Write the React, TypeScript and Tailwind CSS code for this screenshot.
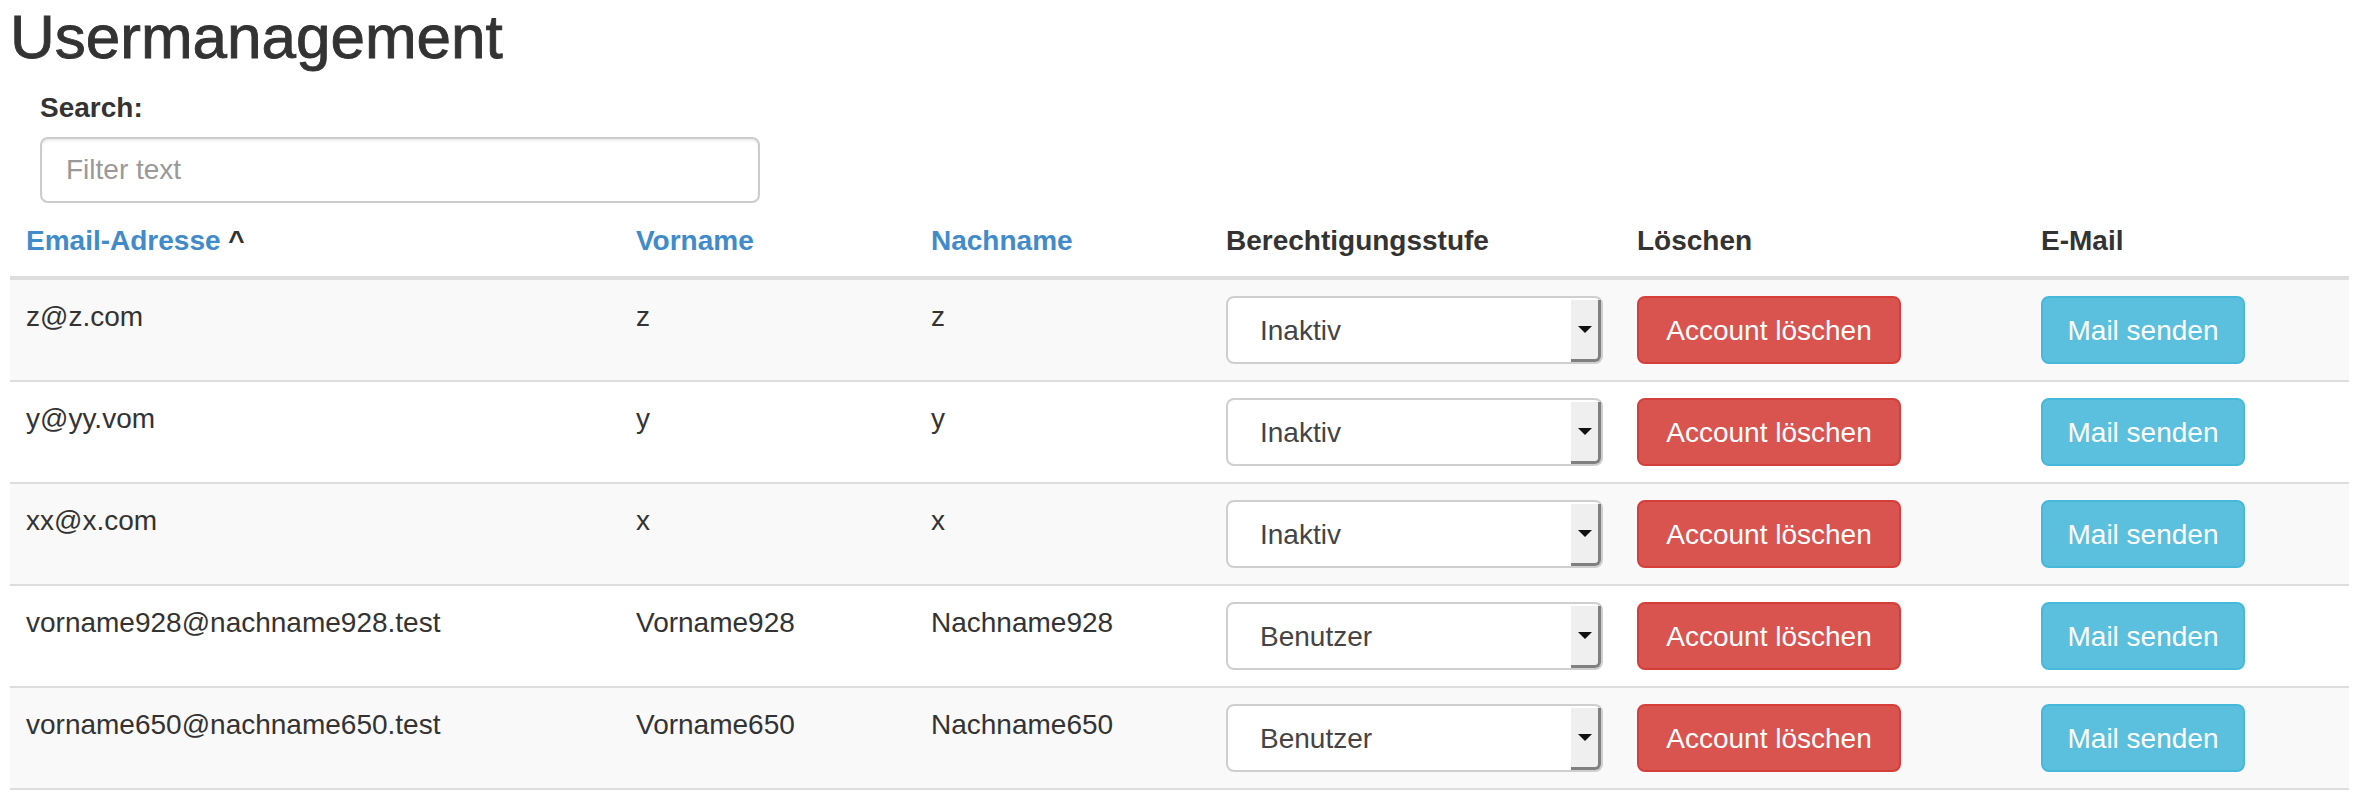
const users = [
  { email: "z@z.com", first: "z", last: "z", role: "Inaktiv" },
  { email: "y@yy.vom", first: "y", last: "y", role: "Inaktiv" },
  { email: "xx@x.com", first: "x", last: "x", role: "Inaktiv" },
  { email: "vorname928@nachname928.test", first: "Vorname928", last: "Nachname928", role: "Benutzer" },
  { email: "vorname650@nachname650.test", first: "Vorname650", last: "Nachname650", role: "Benutzer" },
];

function RoleSelect({ value }: { value: string }) {
  return (
    <div className="flex h-[68px] w-[377px] rounded-[8px] border-2 border-[#cfcfcf] bg-white">
      <div className="flex-1 pl-[32px] pt-[13px] text-[28px] leading-[40px] text-[#444]">{value}</div>
      <div className="mt-[2px] flex w-[30px] items-center justify-center rounded-br-[6px] border-r-[3px] border-b-[3px] border-[#808080] bg-[#efefef]">
        <svg width="14" height="7" viewBox="0 0 14 7">
          <polygon points="0,0 14,0 7,7" fill="#111" />
        </svg>
      </div>
    </div>
  );
}

export default function App() {
  return (
    <div className="h-[792px] w-[2358px] overflow-hidden bg-white px-[10px] font-['Liberation_Sans',Arial,sans-serif] text-[#333]">
      <h1 className="mt-[4px] text-[62px] leading-[66px] [-webkit-text-stroke:0.9px_#333]">Usermanagement</h1>

      <div className="mt-[18px] pl-[30px]">
        <label className="mb-[9px] block text-[28px] font-bold leading-[40px]">Search:</label>
        <input
          className="block h-[66px] w-[720px] rounded-[8px] border-2 border-[#cccccc] px-[24px] text-[28px] shadow-[inset_0_2px_2px_rgba(0,0,0,0.075)] outline-none placeholder:text-[#999]"
          placeholder="Filter text"
        />
      </div>

      <table className="mt-[1px] w-[2339px] table-fixed border-collapse text-left text-[28px] leading-[40px]">
        <thead>
          <tr>
            <th className="w-[610px] border-b-4 border-[#ddd] px-[16px] pt-[17px] pb-[15px] font-bold">
              <span className="text-[#428bca]">Email-Adresse</span> ^
            </th>
            <th className="w-[295px] border-b-4 border-[#ddd] px-[16px] pt-[17px] pb-[15px] font-bold text-[#428bca]">Vorname</th>
            <th className="w-[295px] border-b-4 border-[#ddd] px-[16px] pt-[17px] pb-[15px] font-bold text-[#428bca]">Nachname</th>
            <th className="w-[411px] border-b-4 border-[#ddd] px-[16px] pt-[17px] pb-[15px] font-bold">Berechtigungsstufe</th>
            <th className="w-[404px] border-b-4 border-[#ddd] px-[16px] pt-[17px] pb-[15px] font-bold">Löschen</th>
            <th className="w-[324px] border-b-4 border-[#ddd] px-[16px] pt-[17px] pb-[15px] font-bold">E-Mail</th>
          </tr>
        </thead>
        <tbody>
          {users.map((u, i) => (
            <tr key={u.email} className={i % 2 === 0 ? "bg-[#f9f9f9]" : "bg-white"}>
              <td className="border-b-2 border-[#ddd] px-[16px] pt-[17px] align-top">{u.email}</td>
              <td className="border-b-2 border-[#ddd] px-[16px] pt-[17px] align-top">{u.first}</td>
              <td className="border-b-2 border-[#ddd] px-[16px] pt-[17px] align-top">{u.last}</td>
              <td className="border-b-2 border-[#ddd] px-[16px] py-[16px] align-top">
                <RoleSelect value={u.role} />
              </td>
              <td className="border-b-2 border-[#ddd] px-[16px] py-[16px] align-top">
                <button className="h-[68px] w-[264px] rounded-[8px] border-2 border-[#d43f3a] bg-[#d9534f] pt-[2px] text-[28px] leading-[40px] text-white">
                  Account löschen
                </button>
              </td>
              <td className="border-b-2 border-[#ddd] px-[16px] py-[16px] align-top">
                <button className="h-[68px] w-[204px] rounded-[8px] border-2 border-[#46b8da] bg-[#5bc0de] pt-[2px] text-[28px] leading-[40px] text-white">
                  Mail senden
                </button>
              </td>
            </tr>
          ))}
        </tbody>
      </table>
    </div>
  );
}
